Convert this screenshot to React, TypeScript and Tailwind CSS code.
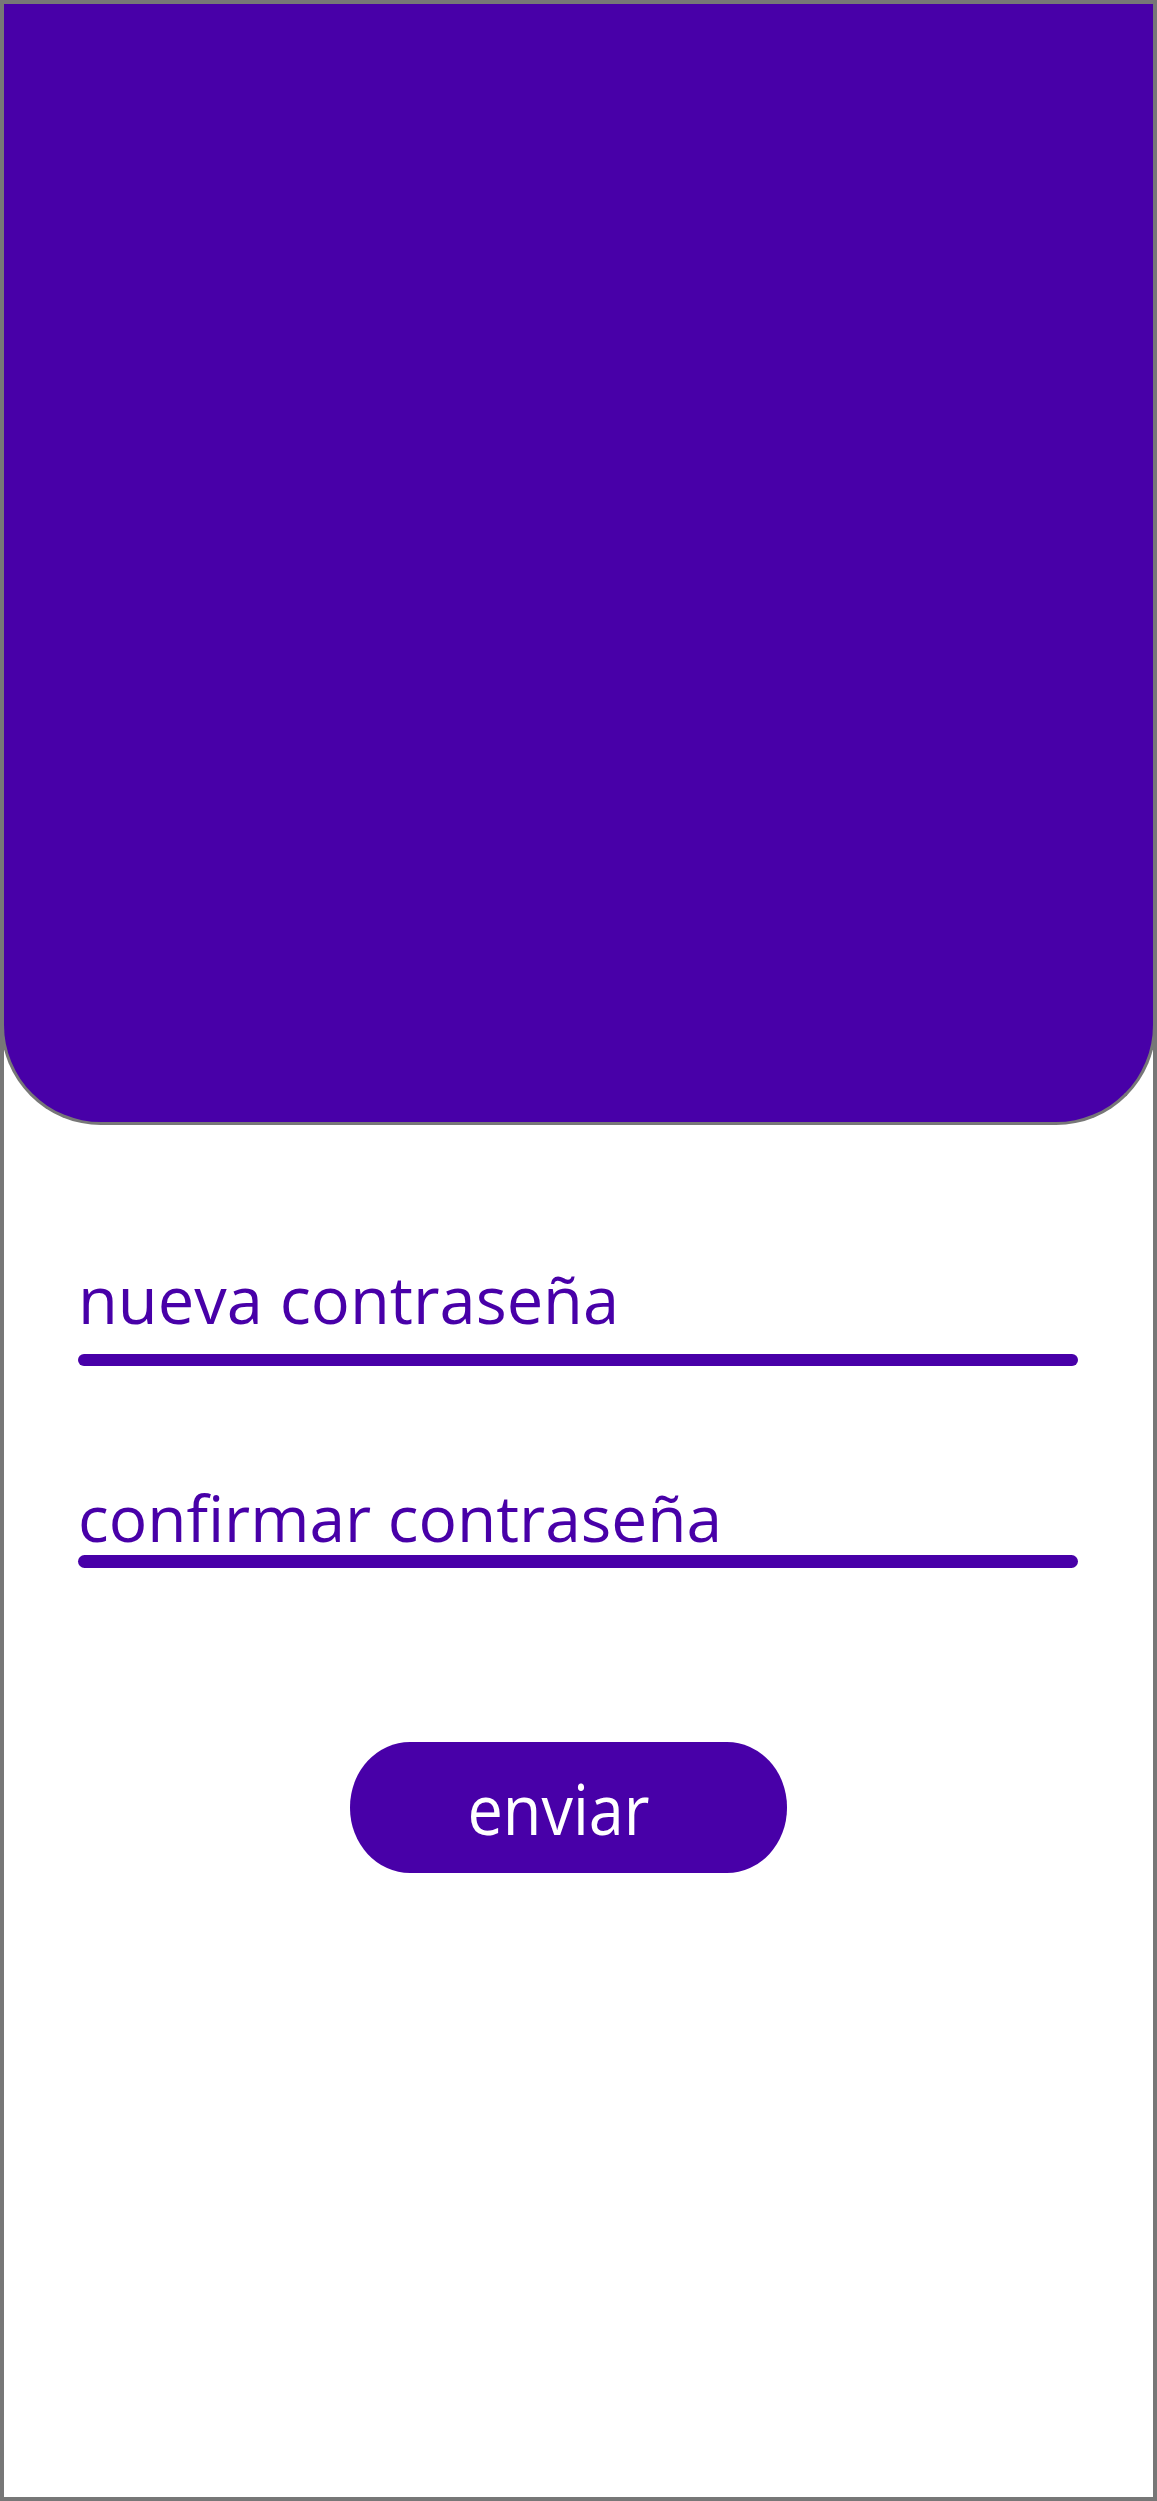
export default function App() {
  return (
    <div className="w-[1157px] h-[2501px] bg-white border-4 border-[#777777] flex flex-col overflow-hidden">
      <div className="-mx-[3px] h-[1121px] shrink-0 bg-[#4800a8] border-[3px] border-t-0 border-[#777777] rounded-b-[100px]" />

      <div className="ml-[74px] w-[1000px] flex flex-col" style={{ fontFamily: '"Open Sans", "Noto Sans", sans-serif' }}>
        <label className="mt-[142px] block text-[65px] leading-none text-[#4800a8]">nueva contraseña</label>
        <div className="mt-[22px] h-[12px] w-full rounded-full bg-[#4800a8]" />

        <label className="mt-[120px] block text-[64px] leading-none text-[#4800a8]">confirmar contraseña</label>
        <div className="mt-[5px] h-[13px] w-full rounded-full bg-[#4800a8]" />
      </div>

      <button className="mt-[174px] ml-[346px] w-[437px] h-[131px] rounded-[60px/65px] bg-[#4800a8] flex items-center justify-center pr-[20px] pt-[8px] text-white text-[63px] leading-none" style={{ fontFamily: '"Open Sans", "Noto Sans", sans-serif' }}>
        <span className="inline-block origin-bottom scale-y-[1.1]">enviar</span>
      </button>
    </div>
  );
}
